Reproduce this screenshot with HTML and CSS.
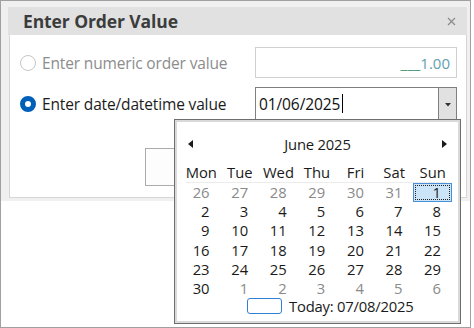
FILE: index.html
```html
<!DOCTYPE html>
<html>
<head>
<meta charset="utf-8">
<link rel="stylesheet" href="styles.css">
</head>
<body>
<div class="frame">
  <div class="dialog-wrap">
    <div class="window">
      <div class="titlebar">
        <span class="title">Enter Order Value</span>
        <svg class="close" width="9" height="9" viewBox="0 0 9 9"><path d="M1 1L8 8M8 1L1 8" stroke="#8a8a8a" stroke-width="1.2" fill="none"/></svg>
      </div>
      <div class="body">
        <div class="row row1">
          <span class="radio"></span>
          <span class="label disabled">Enter numeric order value</span>
          <div class="input numeric"><span class="us">___</span>1.00</div>
        </div>
        <div class="row row2">
          <span class="radio checked"></span>
          <span class="label">Enter date/datetime value</span>
          <div class="input date">
            <span class="dtext">01/06/2025</span><span class="caret"></span>
            <span class="ddbtn"><svg width="6" height="4" viewBox="0 0 6 4"><path d="M0 0H6L3 3.5Z" fill="#333"/></svg></span>
          </div>
        </div>
        <div class="btnrow"><div class="btn"></div></div>
      </div>
    </div>
  </div>

  <div class="popup">
    <div class="monthrow">
      <svg class="arrow" width="5" height="8" viewBox="0 0 5 8"><path d="M5 0V8L0 4Z" fill="#1a1a1a"/></svg>
      <span class="month">June 2025</span>
      <svg class="arrow" width="5" height="8" viewBox="0 0 5 8"><path d="M0 0V8L5 4Z" fill="#1a1a1a"/></svg>
    </div>
    <div class="dow">
      <span>Mon</span><span>Tue</span><span>Wed</span><span>Thu</span><span>Fri</span><span>Sat</span><span>Sun</span>
    </div>
    <div class="sep"></div>
    <div class="days">
      <span class="o">26</span><span class="o">27</span><span class="o">28</span><span class="o">29</span><span class="o">30</span><span class="o">31</span><span class="sel">1</span>
      <span>2</span><span>3</span><span>4</span><span>5</span><span>6</span><span>7</span><span>8</span>
      <span>9</span><span>10</span><span>11</span><span>12</span><span>13</span><span>14</span><span>15</span>
      <span>16</span><span>17</span><span>18</span><span>19</span><span>20</span><span>21</span><span>22</span>
      <span>23</span><span>24</span><span>25</span><span>26</span><span>27</span><span>28</span><span>29</span>
      <span>30</span><span class="o">1</span><span class="o">2</span><span class="o">3</span><span class="o">4</span><span class="o">5</span><span class="o">6</span>
    </div>
    <div class="today">
      <span class="todaybox"></span>
      <span class="todaytext">Today: 07/08/2025</span>
    </div>
  </div>
</div>
</body>
</html>
```

FILE: styles.css
```css
* { box-sizing: border-box; }
html, body { margin: 0; padding: 0; background: #fff; }
body { font-family: "Open Sans", "Noto Sans", sans-serif; }

.frame {
  position: relative;
  width: 471px;
  height: 328px;
  border: 1px solid #a0a0a0;
  background: #fff;
}

.dialog-wrap {
  background: #f0f0f0;
  padding: 6px 2px 3px 7px;
}

.window {
  width: 459px;
}

.titlebar {
  height: 28px;
  background: #e1e1e1;
  display: flex;
  align-items: center;
  justify-content: space-between;
  padding: 0 11px 0 15px;
}

.title {
  font-weight: 700;
  font-size: 17.5px;
  color: #3c3c3c;
  letter-spacing: -0.1px;
}

.close { display: block; margin-top: 1px; }

.body {
  background: #fff;
  border: 1px solid #d6d6d6;
  border-top: none;
  margin: 0 0 0 1px;
  padding: 12px 9px 11px 10px;
}

.row {
  display: flex;
  align-items: center;
}
.row2 { margin-top: 9px; }

.radio {
  width: 16px;
  height: 16px;
  border-radius: 50%;
  border: 1px solid #c6c6c6;
  background: #fff;
  flex: none;
}
.radio.checked {
  border: 5px solid #005fb8;
  background: #fff;
}

.label {
  margin-left: 6px;
  font-size: 15.5px;
  color: #1c1c1c;
  flex: 1;
  letter-spacing: -0.15px;
}
.label.disabled { color: #8c8c8c; }

.input {
  width: 202px;
  border: 1px solid #d0d0d0;
  font-size: 15px;
  display: flex;
  align-items: center;
}
.numeric {
  height: 31px;
  justify-content: flex-end;
  padding-right: 6px;
  color: #5f9fb0;
}
.numeric .us { color: #4d9a78; }

.date {
  height: 33px;
  border-color: #7f7f7f;
  padding-left: 3px;
  color: #111;
  font-size: 15.5px;
}
.dtext { letter-spacing: -0.1px; }
.caret {
  width: 1px;
  height: 19px;
  background: #000;
  margin-left: 2px;
}
.ddbtn {
  margin-left: auto;
  width: 18px;
  align-self: stretch;
  background: #e1e1e1;
  border-left: 1px solid #7f7f7f;
  display: flex;
  align-items: center;
  justify-content: center;
}
.ddbtn svg { display: block; margin-top: 2px; }

.btnrow {
  margin-top: 28px;
  padding-left: 125px;
}
.btn {
  width: 100px;
  height: 38px;
  border: 1px solid #ababab;
  background: #fdfdfd;
}

/* calendar popup */
.popup {
  position: absolute;
  left: 173px;
  top: 118px;
  width: 287px;
  height: 205px;
  background: #fff;
  border: 1px solid #6e6e6e;
  box-shadow: inset 0 0 0 2px #d9d9d9;
  font-size: 14.8px;
  color: #1a1a1a;
  padding: 14px 0 0 7px;
}

.monthrow {
  height: 20px;
  width: 270px;
  display: flex;
  align-items: center;
  justify-content: space-between;
  padding: 0 5px 0 6px;
}
.arrow { display: block; }
.month { letter-spacing: -0.2px; }

.dow {
  margin-top: 9px;
  width: 270px;
  display: grid;
  grid-template-columns: repeat(7, 1fr);
  height: 19px;
  line-height: 19px;
}
.dow span { text-align: center; }

.sep {
  height: 1px;
  background: #ececec;
  margin: 0 0 0 4px;
  width: 261px;
}

.days {
  width: 270px;
  display: grid;
  grid-template-columns: repeat(7, 1fr);
  grid-auto-rows: 19.2px;
}
.days span {
  text-align: right;
  padding-right: 11px;
  line-height: 19px;
}
.days .o { color: #8a8a8a; }
.days .sel {
  background: #cce4f7;
  border: 1px solid #4a90d9;
  outline: 1px dotted #222;
  outline-offset: -3px;
  padding-right: 10px;
  line-height: 17px;
}

.today {
  height: 16px;
  display: flex;
  align-items: center;
  padding-left: 65px;
}
.todaybox {
  width: 35px;
  height: 16px;
  border: 1.5px solid #2f7fd6;
  border-radius: 3px;
}
.todaytext {
  margin-left: 7px;
  letter-spacing: -0.2px;
}
```
